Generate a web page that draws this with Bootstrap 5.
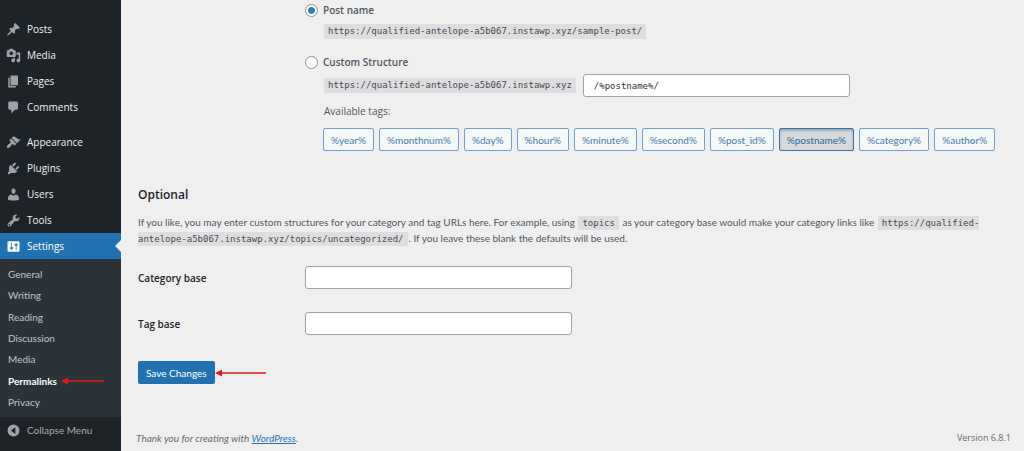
<!DOCTYPE html>
<html lang="en">
<head>
<meta charset="utf-8">
<meta name="viewport" content="width=device-width, initial-scale=1">
<title>Permalink Settings</title>
<link rel="stylesheet" href="https://cdn.jsdelivr.net/npm/bootstrap@5.3.0/dist/css/bootstrap.min.css">
<style>
:root {
  --ui: "Open Sans", "Noto Sans", sans-serif;
  --copy: Lato, "Open Sans", sans-serif;
  --mono: "DejaVu Sans Mono", "Liberation Mono", monospace;
  --wp-blue: #2271b1;
}
body { background: #efefef; color: #50575e; font: 10px/16px var(--ui); }

/* Sidebar */
.side-menu { width: 121px; background: #1d2327; padding-top: 16px; }
.side-link { display: flex; align-items: center; gap: 6px; height: 26px; padding-left: 6px; color: #f0f0f1; text-decoration: none; position: relative; }
.side-link svg { width: 15px; height: 15px; fill: #9ca2a7; flex: none; }
.side-link.current { background: var(--wp-blue); color: #fff; }
.side-link.current svg { fill: #fff; }
.side-link.current::after { content: ""; position: absolute; right: 0; top: 7px; border: 6px solid transparent; border-right-color: #efefef; border-left: 0; }
.side-gap { margin-top: 9px; }
.submenu { display: grid; grid-auto-rows: 1fr; min-height: 158px; padding: 4px 0 4px 8px; background: #2c3338; font-family: var(--copy); }
.submenu a { color: #c0c4c8; text-decoration: none; }
.submenu .current { color: #fff; font-weight: 700; }
.collapse-btn { border: 0; background: none; width: 100%; color: #a7aaad; font-family: var(--copy); }

/* Content */
.content { padding: 2px 13px 4px 17px; min-width: 0; }
.field-col { margin-left: 167px; }
.field-label { width: 167px; color: #1d2327; font-weight: 600; }
.choice { gap: 5px; font-weight: 600; height: 16px; }
.choice .form-check-input { width: 13px; height: 13px; margin: 0; border-color: #8c8f94; background-color: #fff; }
.choice .form-check-input:checked { background-image: radial-gradient(circle, #2c80c0 3px, transparent 4px); }
.choice-body { padding-left: 19px; }
.sample-row { margin: 6px 0 15px; }
code { font: 9px/11px var(--mono); color: #444a50; background: #dedee0; padding: 2px 4px; margin: 0 1px; }
.choice-body code { margin-left: 0; }
.text-field { width: 267px; height: 23px; padding: 0 10px; border: 1px solid #a1a1ab; border-radius: 3px; background: #fff; color: #2c3338; font: 9px/16px var(--mono); }
.choice-body .text-field { margin-left: 6px; }
.tags-title { padding-top: 6px; }
.tag-row { gap: 5px; margin: 9px 0 0 18px; }
.tag-btn { height: 23px; padding: 0 7px; border: 1px solid #6ea1cb; border-radius: 2px; background: #f6f7f7; color: #3f80b4; font: 10px/16px var(--copy); }
.tag-btn.active { background: #d8d9dc; border-color: #3f719c; color: #2a6798; box-shadow: inset 0 2px 4px -2px #3f719c; }
h2 { font: 600 12px/16px var(--ui); color: #1d2327; margin: 36px 0 11px; }
.intro { font-family: var(--copy); margin-bottom: 20px; }
.base-fields { display: grid; gap: 23px; margin-bottom: 26px; }
.save-btn { height: 23px; padding: 0 8px; border: 0; border-radius: 2px; background: var(--wp-blue); color: #fff; font: 10px/16px var(--copy); }
.page-foot { padding-top: 46px; margin-left: -2px; color: #646970; font-family: var(--copy); }
.page-foot a { color: var(--wp-blue); }
.version { font: 9px/16px var(--ui); }
.pointer { fill: #e0191f; flex: none; }
</style>
</head>
<body>
<div class="d-flex min-vh-100">
  <nav class="side-menu flex-shrink-0" aria-label="Main menu">
    <a class="side-link" href="#"><svg viewBox="0 0 20 20"><path d="M10.440 3.020l1.820-1.820 6.360 6.350-1.830 1.820c-1.050-.68-2.480-.57-3.410.36l-.75.75c-.92.93-1.040 2.350-.35 3.410l-1.830 1.820-2.410-2.410-2.800 2.790c-.42.42-3.380 2.710-3.800 2.290s1.860-3.390 2.280-3.810l2.790-2.790L4.100 9.360l1.830-1.820c1.050.69 2.480.57 3.400-.36l.75-.75c.93-.92 1.050-2.350.36-3.410z"/></svg>Posts</a>
    <a class="side-link" href="#"><svg viewBox="0 0 20 20"><path d="M13 11V4c0-.55-.45-1-1-1h-1.670L9 1H5L3.670 3H2c-.55 0-1 .45-1 1v7c0 .55.45 1 1 1h10c.55 0 1-.45 1-1zM7 4.500c1.380 0 2.500 1.120 2.500 2.500S8.380 9.500 7 9.500 4.500 8.380 4.500 7 5.620 4.500 7 4.500zM14 6h5v10.500c0 1.380-1.120 2.500-2.500 2.500S14 17.880 14 16.500s1.120-2.500 2.500-2.500c.17 0 .34.02.5.05V9h-3V6zm-4 8.050V13h2v3.500c0 1.380-1.120 2.500-2.500 2.500S7 17.880 7 16.500 8.120 14 9.500 14c.17 0 .34.02.5.05z"/></svg>Media</a>
    <a class="side-link" href="#"><svg viewBox="0 0 20 20"><path d="M6 15V2h10v13H6zm-1 1h8v2H3V5h2v11z"/></svg>Pages</a>
    <a class="side-link" href="#"><svg viewBox="0 0 20 20"><path d="M5 2h9c1.100 0 2 .9 2 2v7c0 1.100-.9 2-2 2h-2l-5 5v-5H5c-1.100 0-2-.9-2-2V4c0-1.100.9-2 2-2z"/></svg>Comments</a>
    <a class="side-link side-gap" href="#"><svg viewBox="0 0 20 20"><path d="M14.480 11.060L7.410 3.990l1.500-1.500c.5-.56 2.300-.47 3.510.32 1.210.8 1.430 1.280 2.910 2.100 1.180.64 2.450 1.260 4.450.85zm-.71.71L6.700 4.700 4.930 6.470c-.39.39-.39 1.020 0 1.410l1.060 1.060c.39.39.39 1.030 0 1.420-.6.6-1.430 1.110-2.210 1.690-.35.26-.7.53-1.010.84C1.430 14.230.4 16.080 1.400 17.070c.99 1 2.840-.03 4.180-1.360.31-.31.58-.66.85-1.020.57-.78 1.080-1.610 1.690-2.210.39-.39 1.020-.39 1.410 0l1.060 1.060c.39.39 1.020.39 1.410 0z"/></svg>Appearance</a>
    <a class="side-link" href="#"><svg viewBox="0 0 20 20"><path d="M13.110 4.360L9.870 7.600 8 5.730l3.240-3.240c.35-.34 1.050-.2 1.560.32.52.51.66 1.210.31 1.550zm-8 1.770l.91-1.120 9.010 9.010-1.190.84c-.71.71-2.630 1.160-3.820 1.160H6.140L4.900 17.260c-.59.59-1.540.59-2.120 0-.59-.58-.59-1.530 0-2.120l1.240-1.240v-3.880c0-1.130.4-3.190 1.090-3.890zm7.260 3.970l3.240-3.240c.34-.35 1.040-.21 1.550.31.52.51.66 1.210.31 1.550l-3.240 3.250z"/></svg>Plugins</a>
    <a class="side-link" href="#"><svg viewBox="0 0 20 20"><path d="M10 9.250c-2.270 0-2.730-3.440-2.730-3.440C7 4.020 7.820 2 9.970 2c2.160 0 2.980 2.020 2.710 3.810 0 0-.41 3.440-2.680 3.440zm0 2.570L12.720 10c2.390 0 4.520 2.330 4.520 4.530v2.490s-3.650 1.130-7.240 1.130c-3.650 0-7.240-1.130-7.240-1.130v-2.490c0-2.250 1.940-4.480 4.470-4.480z"/></svg>Users</a>
    <a class="side-link" href="#"><svg viewBox="0 0 20 20"><path d="M16.680 9.770c-1.340 1.340-3.300 1.670-4.950.99l-5.410 6.520c-.99.99-2.590.99-3.580 0s-.99-2.590 0-3.570l6.520-5.420c-.68-1.650-.35-3.610.99-4.950 1.280-1.280 3.120-1.620 4.720-1.060l-2.890 2.890 2.820 2.820 2.860-2.870c.53 1.580.18 3.390-1.080 4.650zM3.810 16.210c.4.39 1.040.39 1.430 0 .4-.4.4-1.040 0-1.430-.39-.4-1.030-.4-1.430 0-.39.39-.39 1.030 0 1.430z"/></svg>Tools</a>
    <a class="side-link current" href="#"><svg viewBox="0 0 20 20"><path d="M18 16V4c0-.55-.45-1-1-1H3c-.55 0-1 .45-1 1v12c0 .55.45 1 1 1h14c.55 0 1-.45 1-1zM8 11h1c.55 0 1 .45 1 1s-.45 1-1 1H8v1.500c0 .28-.22.5-.5.5s-.5-.22-.5-.5V13H6c-.55 0-1-.45-1-1s.45-1 1-1h1V5.500c0-.28.22-.5.5-.5s.5.22.5.5V11zm5-2h-1c-.55 0-1-.45-1-1s.45-1 1-1h1V5.500c0-.28.22-.5.5-.5s.5.22.5.5V7h1c.55 0 1 .45 1 1s-.45 1-1 1h-1v5.500c0 .28-.22.5-.5.5s-.5-.22-.5-.5V9z"/></svg>Settings</a>
    <div class="submenu align-items-center">
      <a href="#">General</a>
      <a href="#">Writing</a>
      <a href="#">Reading</a>
      <a href="#">Discussion</a>
      <a href="#">Media</a>
      <a class="current d-flex align-items-center gap-1" href="#" aria-current="page">Permalinks <svg class="pointer" width="43" height="8" viewBox="0 0 43 8"><path d="M0 4 7 .5V3.300H43V4.700H7V7.500Z"/></svg></a>
      <a href="#">Privacy</a>
    </div>
    <button class="side-link collapse-btn" type="button"><svg viewBox="0 0 20 20"><path fill-rule="evenodd" d="M10 2a8 8 0 1 1 0 16 8 8 0 0 1 0-16zM12.500 5.500 6.500 10l6 4.500z"/></svg>Collapse Menu</button>
  </nav>

  <main class="content flex-grow-1 d-flex flex-column">
    <form>
      <div class="field-col">
        <div class="choice d-flex align-items-center">
          <input class="form-check-input" type="radio" name="structure" id="post-name" checked>
          <label for="post-name">Post name</label>
        </div>
        <div class="choice-body sample-row d-flex">
          <code>https://qualified-antelope-a5b067.instawp.xyz/sample-post/</code>
        </div>
        <div class="choice d-flex align-items-center">
          <input class="form-check-input" type="radio" name="structure" id="custom">
          <label for="custom">Custom Structure</label>
        </div>
        <div class="choice-body d-flex align-items-center mt-1">
          <code>https://qualified-antelope-a5b067.instawp.xyz</code>
          <input class="text-field" type="text" value="/%postname%/" aria-label="Custom structure">
        </div>
        <div class="choice-body tags-title">Available tags:</div>
        <div class="tag-row d-flex flex-wrap">
          <button type="button" class="tag-btn">%year%</button>
          <button type="button" class="tag-btn">%monthnum%</button>
          <button type="button" class="tag-btn">%day%</button>
          <button type="button" class="tag-btn">%hour%</button>
          <button type="button" class="tag-btn">%minute%</button>
          <button type="button" class="tag-btn">%second%</button>
          <button type="button" class="tag-btn">%post_id%</button>
          <button type="button" class="tag-btn active" aria-pressed="true">%postname%</button>
          <button type="button" class="tag-btn">%category%</button>
          <button type="button" class="tag-btn">%author%</button>
        </div>
      </div>

      <h2>Optional</h2>
      <p class="intro">If you like, you may enter custom structures for your category and tag URLs here. For example, using <code>topics</code> as your category base would make your category links like <code>https://qualified-antelope-a5b067.instawp.xyz/topics/uncategorized/</code>. If you leave these blank the defaults will be used.</p>

      <div class="base-fields">
        <div class="d-flex align-items-center">
          <label class="field-label" for="category-base">Category base</label>
          <input class="text-field" type="text" id="category-base">
        </div>
        <div class="d-flex align-items-center">
          <label class="field-label" for="tag-base">Tag base</label>
          <input class="text-field" type="text" id="tag-base">
        </div>
      </div>
      <div class="d-flex align-items-center">
        <button class="save-btn" type="submit">Save Changes</button>
        <svg class="pointer" width="51" height="8" viewBox="0 0 51 8"><path d="M0 4 7 .5V3.300H51V4.700H7V7.500Z"/></svg>
      </div>
    </form>
    <footer class="page-foot d-flex justify-content-between">
      <em>Thank you for creating with <a href="#">WordPress</a>.</em>
      <span class="version">Version 6.8.1</span>
    </footer>
  </main>
</div>
<script src="https://cdn.jsdelivr.net/npm/bootstrap@5.3.0/dist/js/bootstrap.bundle.min.js"></script>
</body>
</html>
